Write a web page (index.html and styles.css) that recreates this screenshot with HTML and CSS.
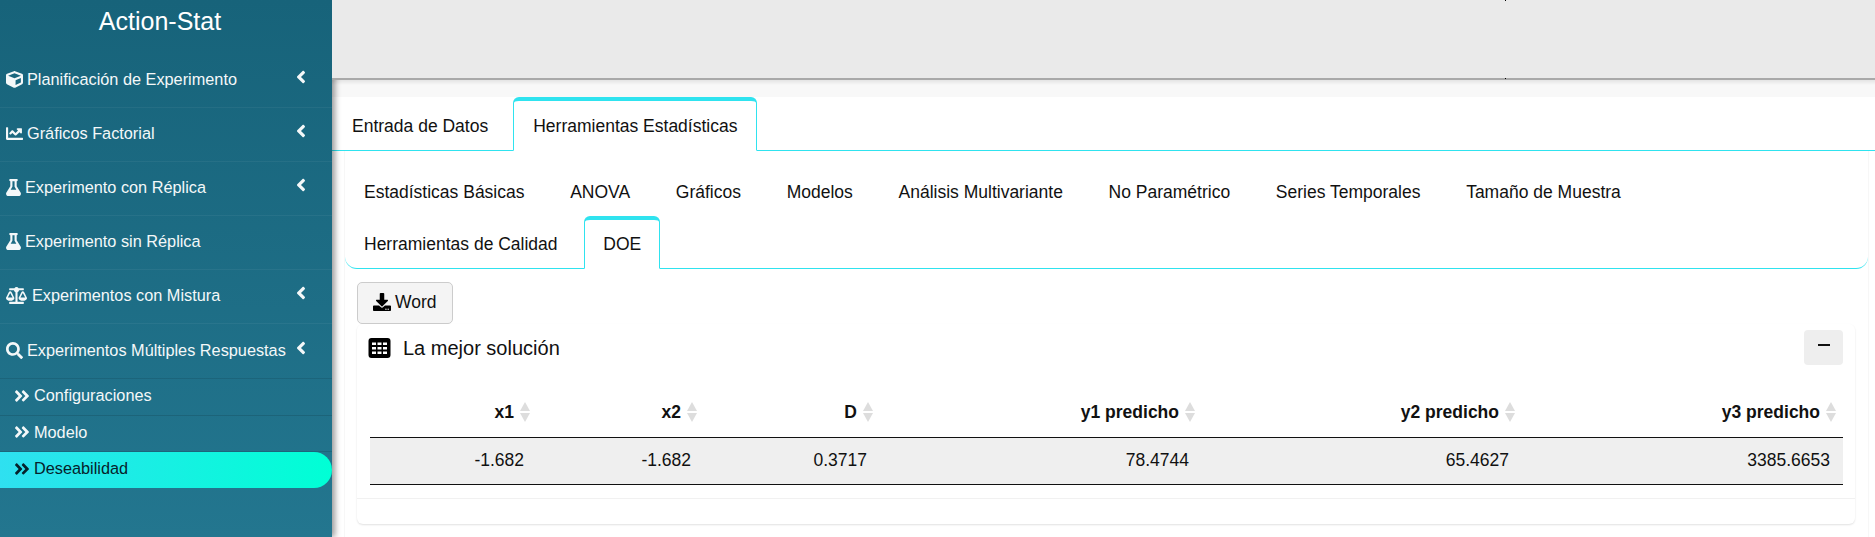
FILE: index.html
```html
<!DOCTYPE html>
<html lang="es">
<head>
    <meta charset="utf-8">
    <title>Action-Stat</title>
    <link rel="stylesheet" href="styles.css">
</head>
<body>
    <aside class="sidebar">
        <div class="brand">Action-Stat</div>
        <ul class="menu">
            <li class="menu-item">
                <svg class="icon icon-cube" viewBox="0 0 512 512"><path d="M239.1 6.3l-208 78c-18.7 7-31.1 25-31.1 45v225.1c0 18.2 10.3 34.8 26.5 42.9l208 104c13.5 6.8 29.4 6.8 42.9 0l208-104c16.3-8.1 26.5-24.8 26.5-42.9V129.3c0-20-12.4-37.9-31.1-44.9l-208-78C262 2.2 250 2.2 239.1 6.3zM256 68.4l192 72v1.1l-192 78-192-78v-1.1l192-72zm32 356V275.5l160-65v133.9l-160 80z"/></svg>
                <span class="menu-label">Planificación de Experimento</span>
                <svg class="chevron" viewBox="0 0 256 512"><path d="M31.7 239l136-136c9.4-9.4 24.6-9.4 33.9 0l22.6 22.6c9.4 9.4 9.4 24.6 0 33.9L127.9 256l96.4 96.4c9.4 9.4 9.4 24.6 0 33.9L201.7 409c-9.4 9.4-24.6 9.4-33.9 0l-136-136c-9.5-9.4-9.5-24.6-.1-34z"/></svg>
            </li>
            <li class="menu-item">
                <svg class="icon icon-cube" viewBox="0 0 512 512"><path d="M496 384H64V80c0-8.84-7.16-16-16-16H16C7.16 64 0 71.16 0 80v336c0 17.67 14.33 32 32 32h464c8.84 0 16-7.16 16-16v-32c0-8.84-7.16-16-16-16zM464 96H345.94c-21.38 0-32.09 25.85-16.97 40.97l32.4 32.4L288 242.75l-73.37-73.37c-12.5-12.5-32.76-12.5-45.25 0l-68.69 68.69c-6.25 6.25-6.25 16.38 0 22.63l22.62 22.62c6.25 6.25 16.38 6.25 22.63 0L192 237.25l73.37 73.37c12.5 12.5 32.76 12.5 45.25 0l96-96 32.4 32.4c15.12 15.12 40.97 4.41 40.97-16.97V112c.01-8.84-7.15-16-15.99-16z"/></svg>
                <span class="menu-label">Gráficos Factorial</span>
                <svg class="chevron" viewBox="0 0 256 512"><path d="M31.7 239l136-136c9.4-9.4 24.6-9.4 33.9 0l22.6 22.6c9.4 9.4 9.4 24.6 0 33.9L127.9 256l96.4 96.4c9.4 9.4 9.4 24.6 0 33.9L201.7 409c-9.4 9.4-24.6 9.4-33.9 0l-136-136c-9.5-9.4-9.5-24.6-.1-34z"/></svg>
            </li>
            <li class="menu-item">
                <svg class="icon icon-flask" viewBox="0 0 448 512"><path d="M437.2 403.5L320 215V64h8c13.3 0 24-10.7 24-24V24c0-13.3-10.7-24-24-24H120c-13.3 0-24 10.7-24 24v16c0 13.3 10.7 24 24 24h8v151L10.8 403.5C-18.5 450.6 15.3 512 70.9 512h306.2c55.7 0 89.4-61.5 60.1-108.5zM137.9 320l48.2-77.6c3.7-5.2 5.8-11.6 5.8-18.4V64h64v160c0 6.9 2.2 13.2 5.8 18.4l48.2 77.6h-172z"/></svg>
                <span class="menu-label">Experimento con Réplica</span>
                <svg class="chevron" viewBox="0 0 256 512"><path d="M31.7 239l136-136c9.4-9.4 24.6-9.4 33.9 0l22.6 22.6c9.4 9.4 9.4 24.6 0 33.9L127.9 256l96.4 96.4c9.4 9.4 9.4 24.6 0 33.9L201.7 409c-9.4 9.4-24.6 9.4-33.9 0l-136-136c-9.5-9.4-9.5-24.6-.1-34z"/></svg>
            </li>
            <li class="menu-item">
                <svg class="icon icon-flask" viewBox="0 0 448 512"><path d="M437.2 403.5L320 215V64h8c13.3 0 24-10.7 24-24V24c0-13.3-10.7-24-24-24H120c-13.3 0-24 10.7-24 24v16c0 13.3 10.7 24 24 24h8v151L10.8 403.5C-18.5 450.6 15.3 512 70.9 512h306.2c55.7 0 89.4-61.5 60.1-108.5zM137.9 320l48.2-77.6c3.7-5.2 5.8-11.6 5.8-18.4V64h64v160c0 6.9 2.2 13.2 5.8 18.4l48.2 77.6h-172z"/></svg>
                <span class="menu-label">Experimento sin Réplica</span>
            </li>
            <li class="menu-item">
                <svg class="icon icon-scale" viewBox="0 0 640 512"><path d="M256 336h-.02c0-16.18 1.34-8.73-85.05-181.51-17.65-35.29-68.19-35.36-85.87 0C-2.06 328.75.02 320.33.02 336H0c0 44.18 57.31 80 128 80s128-35.82 128-80zM128 176l72 144H56l72-144zm511.98 160c0-16.18 1.34-8.73-85.05-181.51-17.65-35.29-68.19-35.36-85.87 0-87.12 174.26-85.04 165.84-85.04 181.51H384c0 44.18 57.31 80 128 80s128-35.82 128-80h-.02zM440 320l72-144 72 144H440zm88 128H352V153.25c23.51-10.29 41.16-31.48 46.39-57.25H528c8.84 0 16-7.16 16-16V48c0-8.84-7.16-16-16-16H383.64C369.04 12.68 346.09 0 320 0s-49.04 12.68-63.64 32H112c-8.84 0-16 7.16-16 16v32c0 8.84 7.16 16 16 16h129.61c5.23 25.76 22.87 46.96 46.39 57.25V448H112c-8.84 0-16 7.16-16 16v32c0 8.84 7.16 16 16 16h416c8.84 0 16-7.16 16-16v-32c0-8.84-7.16-16-16-16z"/></svg>
                <span class="menu-label">Experimentos con Mistura</span>
                <svg class="chevron" viewBox="0 0 256 512"><path d="M31.7 239l136-136c9.4-9.4 24.6-9.4 33.9 0l22.6 22.6c9.4 9.4 9.4 24.6 0 33.9L127.9 256l96.4 96.4c9.4 9.4 9.4 24.6 0 33.9L201.7 409c-9.4 9.4-24.6 9.4-33.9 0l-136-136c-9.5-9.4-9.5-24.6-.1-34z"/></svg>
            </li>
            <li class="menu-item">
                <svg class="icon icon-cube" viewBox="0 0 512 512"><path d="M505 442.7L405.3 343c-4.5-4.5-10.6-7-17-7H372c27.6-35.3 44-79.7 44-128C416 93.1 322.9 0 208 0S0 93.1 0 208s93.1 208 208 208c48.3 0 92.7-16.4 128-44v16.3c0 6.4 2.5 12.5 7 17l99.7 99.7c9.4 9.4 24.6 9.4 33.9 0l28.3-28.3c9.4-9.4 9.4-24.6.1-34zM208 336c-70.7 0-128-57.2-128-128 0-70.7 57.2-128 128-128 70.7 0 128 57.2 128 128 0 70.7-57.2 128-128 128z"/></svg>
                <span class="menu-label">Experimentos Múltiples Respuestas</span>
                <svg class="chevron" viewBox="0 0 256 512"><path d="M31.7 239l136-136c9.4-9.4 24.6-9.4 33.9 0l22.6 22.6c9.4 9.4 9.4 24.6 0 33.9L127.9 256l96.4 96.4c9.4 9.4 9.4 24.6 0 33.9L201.7 409c-9.4 9.4-24.6 9.4-33.9 0l-136-136c-9.5-9.4-9.5-24.6-.1-34z"/></svg>
            </li>
        </ul>
        <ul class="submenu">
            <li class="submenu-item">
                <svg class="icon-double" viewBox="0 0 448 512"><path d="M224.3 273l-136 136c-9.4 9.4-24.6 9.4-33.9 0l-22.6-22.6c-9.4-9.4-9.4-24.6 0-33.9l96.4-96.4-96.4-96.4c-9.4-9.4-9.4-24.6 0-33.9L54.3 103c9.4-9.4 24.6-9.4 33.9 0l136 136c9.5 9.4 9.5 24.6.1 34zm192-34l-136-136c-9.4-9.4-24.6-9.4-33.9 0l-22.6 22.6c-9.4 9.4-9.4 24.6 0 33.9l96.4 96.4-96.4 96.4c-9.4 9.4-9.4 24.6 0 33.9l22.6 22.6c9.4 9.4 24.6 9.4 33.9 0l136-136c9.4-9.2 9.4-24.4 0-33.8z"/></svg>
                Configuraciones
            </li>
            <li class="submenu-item">
                <svg class="icon-double" viewBox="0 0 448 512"><path d="M224.3 273l-136 136c-9.4 9.4-24.6 9.4-33.9 0l-22.6-22.6c-9.4-9.4-9.4-24.6 0-33.9l96.4-96.4-96.4-96.4c-9.4-9.4-9.4-24.6 0-33.9L54.3 103c9.4-9.4 24.6-9.4 33.9 0l136 136c9.5 9.4 9.5 24.6.1 34zm192-34l-136-136c-9.4-9.4-24.6-9.4-33.9 0l-22.6 22.6c-9.4 9.4-9.4 24.6 0 33.9l96.4 96.4-96.4 96.4c-9.4 9.4-9.4 24.6 0 33.9l22.6 22.6c9.4 9.4 24.6 9.4 33.9 0l136-136c9.4-9.2 9.4-24.4 0-33.8z"/></svg>
                Modelo
            </li>
            <li class="submenu-item active">
                <svg class="icon-double" viewBox="0 0 448 512"><path d="M224.3 273l-136 136c-9.4 9.4-24.6 9.4-33.9 0l-22.6-22.6c-9.4-9.4-9.4-24.6 0-33.9l96.4-96.4-96.4-96.4c-9.4-9.4-9.4-24.6 0-33.9L54.3 103c9.4-9.4 24.6-9.4 33.9 0l136 136c9.5 9.4 9.5 24.6.1 34zm192-34l-136-136c-9.4-9.4-24.6-9.4-33.9 0l-22.6 22.6c-9.4 9.4-9.4 24.6 0 33.9l96.4 96.4-96.4 96.4c-9.4 9.4-9.4 24.6 0 33.9l22.6 22.6c9.4 9.4 24.6 9.4 33.9 0l136-136c9.4-9.2 9.4-24.4 0-33.8z"/></svg>
                Deseabilidad
            </li>
        </ul>
    </aside>

    <main class="content">
        <header class="topbar">
            <span class="speck speck-top"></span>
            <span class="speck speck-bottom"></span>
        </header>
        <div class="topbar-band"></div>

        <nav class="tabs tabs-main">
            <a class="tab">Entrada de Datos</a>
            <a class="tab tab-active">Herramientas Estadísticas</a>
        </nav>

        <div class="panel">
            <nav class="tabs tabs-sub">
                <a class="tab">Estadísticas Básicas</a>
                <a class="tab">ANOVA</a>
                <a class="tab">Gráficos</a>
                <a class="tab">Modelos</a>
                <a class="tab">Análisis Multivariante</a>
                <a class="tab">No Paramétrico</a>
                <a class="tab">Series Temporales</a>
                <a class="tab">Tamaño de Muestra</a>
                <a class="tab">Herramientas de Calidad</a>
                <a class="tab tab-active">DOE</a>
            </nav>

            <div class="panel-body">
                <button class="btn-word">
                    <svg class="icon-download" viewBox="0 0 512 512"><path d="M216 0h80c13.3 0 24 10.7 24 24v168h87.7c17.8 0 26.7 21.5 14.1 34.1L269.7 378.3c-7.5 7.5-19.8 7.5-27.3 0L90.1 226.1c-12.6-12.6-3.7-34.1 14.1-34.1H192V24c0-13.3 10.7-24 24-24zm296 376v112c0 13.3-10.7 24-24 24H24c-13.3 0-24-10.7-24-24V376c0-13.3 10.7-24 24-24h146.7l49 49c20.1 20.1 52.5 20.1 72.6 0l49-49H488c13.3 0 24 10.7 24 24zm-124 88c0-11-9-20-20-20s-20 9-20 20 9 20 20 20 20-9 20-20zm64 0c0-11-9-20-20-20s-20 9-20 20 9 20 20 20 20-9 20-20z"/></svg>
                    Word
                </button>

                <section class="card">
                    <div class="card-header">
                        <svg class="icon-table" viewBox="0 0 22 20"><path fill-rule="evenodd" d="M3 0h16a3 3 0 0 1 3 3v14a3 3 0 0 1-3 3H3a3 3 0 0 1-3-3V3a3 3 0 0 1 3-3zM3.5 4.5v2.5h4V4.500zm5.500 0v2.500h4V4.500zm5.500 0v2.500h4V4.500zM3.500 9v2.500h4V9zm5.500 0v2.500h4V9zm5.500 0v2.500h4V9zM3.500 13.500V16h4v-2.500zm5.500 0V16h4v-2.500zm5.500 0V16h4v-2.500z"/></svg>
                        <h3 class="card-title">La mejor solución</h3>
                        <button class="btn-collapse"><span class="minus"></span></button>
                    </div>
                    <div class="card-body">
                        <table class="data-table">
                            <colgroup>
                                <col class="col-x1"><col class="col-x2"><col class="col-d">
                                <col class="col-y1"><col class="col-y2"><col class="col-y3">
                            </colgroup>
                            <thead>
                                <tr>
                                    <th>x1<span class="sort"></span></th>
                                    <th>x2<span class="sort"></span></th>
                                    <th>D<span class="sort"></span></th>
                                    <th>y1 predicho<span class="sort"></span></th>
                                    <th>y2 predicho<span class="sort"></span></th>
                                    <th>y3 predicho<span class="sort"></span></th>
                                </tr>
                            </thead>
                            <tbody>
                                <tr>
                                    <td>-1.682</td>
                                    <td>-1.682</td>
                                    <td>0.3717</td>
                                    <td>78.4744</td>
                                    <td>65.4627</td>
                                    <td>3385.6653</td>
                                </tr>
                            </tbody>
                        </table>
                    </div>
                    <div class="card-footer"></div>
                </section>
            </div>
        </div>
    </main>
</body>
</html>
```

FILE: styles.css
```css
* {
    box-sizing: border-box;
}
html, body {
    height: 100%;
}
body {
    margin: 0;
    display: flex;
    overflow: hidden;
    font-family: "Liberation Sans", Arial, sans-serif;
    font-size: 17.5px;
    color: #111;
    background-color: #fff;
}

/* sidebar */
.sidebar {
    width: 332px;
    flex-shrink: 0;
    position: relative;
    z-index: 2;
    background: linear-gradient(to bottom, #17637a, #23768f);
    box-shadow: 3px 0 6px rgba(0, 0, 0, 0.4);
    color: #f4f8f9;
}
.brand {
    height: 54px;
    padding: 5px 12px 0 0;
    text-align: center;
    font-size: 25px;
    line-height: 32px;
    color: #fff;
}
.menu, .submenu {
    list-style: none;
    margin: 0;
    padding: 0;
}
.menu-item {
    height: 54px;
    padding: 0 0 2px 6px;
    display: flex;
    align-items: center;
    font-size: 16.3px;
    border-bottom: 1px solid rgba(255, 255, 255, 0.05);
}
.menu-item:last-child {
    border-bottom: none;
}
.icon, .chevron, .icon-double {
    fill: currentColor;
    flex-shrink: 0;
}
.icon {
    height: 17px;
    margin-right: 4px;
}
.icon-cube {
    width: 17px;
}
.icon-flask {
    width: 15px;
    margin-right: 4px;
}
.icon-scale {
    width: 21px;
    margin-right: 5px;
}
.menu-label {
    white-space: nowrap;
}
.chevron {
    width: 10px;
    height: 20px;
    margin-left: auto;
    margin-right: 26px;
    margin-top: -5px;
}
.submenu {
    border-top: 1px solid rgba(0, 0, 0, 0.1);
}
.submenu-item {
    height: 36.5px;
    padding: 0 0 2px 14px;
    display: flex;
    align-items: center;
    gap: 4px;
    font-size: 16.3px;
    border-bottom: 1px solid rgba(0, 0, 0, 0.12);
}
.icon-double {
    width: 16px;
    height: 18px;
}
.submenu-item.active {
    height: 36px;
    padding-bottom: 3px;
    color: #06222b;
    border-bottom: none;
    border-radius: 0 18px 18px 0;
    background: linear-gradient(to right, #2fe0f0, #00ffd5);
}

/* top area */
.content {
    flex: 1;
    min-width: 0;
    background-color: #fff;
}
.topbar {
    height: 80px;
    position: relative;
    z-index: 3;
    background-color: #eaeaea;
    border-bottom: 2px solid #a9a9a9;
}
.topbar-band {
    height: 17px;
    background: linear-gradient(to bottom, #e4e4e4, #f8f8f8 5px);
}
.speck {
    position: absolute;
    left: 1173px;
    width: 1px;
    height: 1px;
    background-color: #000;
}
.speck-top {
    top: 0;
}
.speck-bottom {
    top: 78px;
}

/* tabs */
.tabs {
    display: flex;
    flex-wrap: wrap;
}
.tabs-main {
    height: 54px;
    border-bottom: 1px solid #2fe3ef;
    column-gap: 5px;
}
.tabs-sub {
    padding-top: 13px;
    column-gap: 7.7px;
    border-bottom: 1px solid #2fe3ef;
    border-radius: 0 0 12px 12px;
}
.tab {
    padding: 0 18px;
    height: 52px;
    white-space: nowrap;
    color: #111;
    border: 1px solid transparent;
    border-top-width: 4px;
    line-height: 48px;
}
.tabs-main .tab {
    padding: 0 19px;
    height: 54px;
    margin-bottom: -1px;
    line-height: 50px;
}
.tab-active {
    background-color: #fff;
    border-color: #2fe3ef;
    border-bottom-color: #fff;
    border-radius: 6px 6px 0 0;
}
.tabs-sub .tab-active {
    height: 53px;
    margin-bottom: -1px;
}

/* panel */
.panel {
    margin: 0 6px 0 12px;
    height: 387px;
    border-left: 1px solid #f7f7f7;
    border-right: 1px solid #f7f7f7;
}
.panel-body {
    padding: 13px 13px 0 12px;
}
.btn-word {
    display: flex;
    align-items: center;
    gap: 4px;
    width: 96px;
    height: 42px;
    padding: 0 15px 2px;
    font: inherit;
    color: #111;
    background-color: #f4f4f4;
    border: 1px solid #ccc;
    border-radius: 5px;
}
.icon-download {
    width: 18px;
    height: 18px;
    flex-shrink: 0;
    fill: #000;
}
.card {
    height: 200px;
    border-radius: 6px;
    box-shadow: 0 1px 2px rgba(0, 0, 0, 0.12);
    display: flex;
    flex-direction: column;
    background-color: #fff;
}
.card-header {
    height: 42px;
    padding: 6px 12px 0 11px;
    display: flex;
    align-items: flex-start;
}
.icon-table {
    width: 23px;
    height: 20px;
    margin-top: 8px;
    fill: #000;
}
.card-title {
    margin: 0 0 0 12px;
    font-size: 20px;
    font-weight: 400;
    line-height: 36px;
}
.btn-collapse {
    margin-left: auto;
    width: 39px;
    height: 35px;
    padding: 0;
    border: none;
    border-radius: 4px;
    background-color: #eee;
    display: flex;
    align-items: center;
    justify-content: center;
}
.minus {
    width: 12px;
    height: 2px;
    margin-bottom: 6px;
    background-color: #111;
}
.card-body {
    flex: 1;
    padding: 0 12px 0 13px;
}

/* table */
.data-table {
    width: 100%;
    table-layout: fixed;
    border-collapse: collapse;
}
.col-x1 { width: 167px; }
.col-x2 { width: 167px; }
.col-d { width: 176px; }
.col-y1 { width: 322px; }
.col-y2 { width: 320px; }
.col-y3 { width: 321px; }
.data-table th {
    height: 71px;
    padding: 22px 7px 0 0;
    text-align: right;
    font-weight: 700;
    border-bottom: 1px solid #111;
}
.data-table td {
    height: 47px;
    padding: 0 13px 0 0;
    text-align: right;
    background-color: #efefef;
    border-bottom: 1px solid #111;
}
.sort {
    display: inline-block;
    vertical-align: -4px;
    width: 10px;
    height: 20px;
    margin-left: 6px;
}
.sort::before, .sort::after {
    content: "";
    display: block;
    border-left: 5px solid transparent;
    border-right: 5px solid transparent;
}
.sort::before {
    border-bottom: 9px solid #ddd;
    margin-bottom: 2px;
}
.sort::after {
    border-top: 9px solid #ddd;
}
.card-footer {
    height: 26px;
    border-top: 1px solid #f1f1f1;
}
```
